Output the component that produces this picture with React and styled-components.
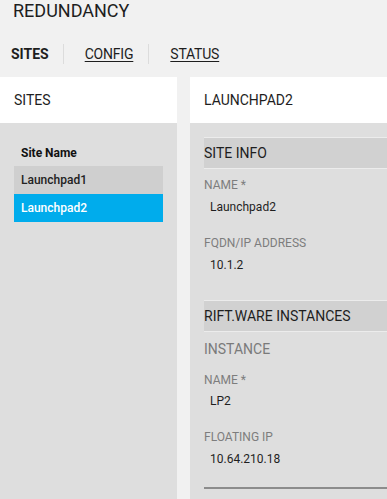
import React from "react";
import styled, { createGlobalStyle } from "styled-components";

const Global = createGlobalStyle`
  html, body { margin: 0; padding: 0; }
  body {
    background: #f1f1f1;
    font-family: Roboto, "Liberation Sans", Arial, sans-serif;
    color: #222;
    overflow: hidden;
  }
`;

const Page = styled.div`
  display: flex;
  flex-direction: column;
  height: 499px;
  overflow: hidden;
`;

const Title = styled.h1`
  margin: 0 0 0 13px;
  font-size: 18px;
  line-height: 22px;
  font-weight: 400;
  color: #1e1e1e;
`;

const Tabs = styled.nav`
  display: flex;
  align-items: center;
  margin: 22px 0 13px 11px;
  height: 20px;
`;

const Tab = styled.a`
  font-size: 14px;
  line-height: 20px;
  letter-spacing: ${(p) => (p.$active ? "0" : "-0.2px")};
  color: #1e1e1e;
  font-weight: ${(p) => (p.$active ? 700 : 400)};
  text-decoration: ${(p) => (p.$active ? "none" : "underline")};
  text-underline-offset: 2px;
  padding: ${(p) => (p.$first ? "0 14px 0 0" : "0 15px 0 21px")};
  border-left: ${(p) => (p.$first ? "none" : "1px solid #dcdcdc")};
  cursor: pointer;
`;

const Panels = styled.div`
  flex: 1;
  display: flex;
  gap: 13px;
  min-height: 0;
`;

const Panel = styled.section`
  display: flex;
  flex-direction: column;
  background: #dedede;
  ${(p) => (p.$width ? `width: ${p.$width}px; flex: none;` : "flex: 1;")}
`;

const PanelHeader = styled.header`
  height: 46px;
  background: #fff;
  display: flex;
  align-items: center;
  padding-left: 14px;
  font-size: 14px;
  color: #1e1e1e;
  flex: none;
`;

const PanelBody = styled.div`
  padding: ${(p) => p.$pad};
  flex: 1;
`;

const SiteTable = styled.div`
  width: 149px;
`;

const TableHead = styled.div`
  font-size: 12px;
  font-weight: 700;
  line-height: 16px;
  padding: 0 7px 5px;
  color: #111;
`;

const Row = styled.div`
  height: 28px;
  display: flex;
  align-items: center;
  padding: 0 7px;
  font-size: 12px;
  font-weight: 500;
  background: ${(p) => (p.$selected ? "#00acec" : "#cfcfcf")};
  color: ${(p) => (p.$selected ? "#fff" : "#222")};
`;

const SectionHeader = styled.div`
  height: 30px;
  display: flex;
  align-items: center;
  background: #d1d1d1;
  border-top: 1px solid #ececec;
  border-bottom: 1px solid #ececec;
  font-size: 14px;
  color: #1e1e1e;
  margin-top: ${(p) => p.$mt || 0}px;
`;

const SubTitle = styled.div`
  font-size: 14px;
  line-height: 20px;
  color: #7a7a7a;
  margin-top: 7px;
`;

const Field = styled.div`
  margin-top: ${(p) => p.$mt}px;
`;

const Label = styled.div`
  font-size: 12px;
  line-height: 16px;
  color: #7d7d7d;
`;

const Value = styled.div`
  font-size: 12px;
  line-height: 16px;
  color: #1e1e1e;
  padding-left: 6px;
  margin-top: ${(p) => p.$gap}px;
`;

const Rule = styled.hr`
  border: none;
  height: 2px;
  background: #8c8c8c;
  margin: 20px 0 0;
`;

export default function App() {
  return (
    <>
      <Global />
      <Page>
        <Title>REDUNDANCY</Title>
        <Tabs>
          <Tab $active $first>SITES</Tab>
          <Tab>CONFIG</Tab>
          <Tab>STATUS</Tab>
        </Tabs>
        <Panels>
          <Panel $width={177}>
            <PanelHeader>SITES</PanelHeader>
            <PanelBody $pad="22px 0 0 14px">
              <SiteTable>
                <TableHead>Site Name</TableHead>
                <Row>Launchpad1</Row>
                <Row $selected>Launchpad2</Row>
              </SiteTable>
            </PanelBody>
          </Panel>
          <Panel>
            <PanelHeader>LAUNCHPAD2</PanelHeader>
            <PanelBody $pad="14px 0 0 14px">
              <SectionHeader>SITE INFO</SectionHeader>
              <Field $mt={8}>
                <Label>NAME *</Label>
                <Value $gap={6}>Launchpad2</Value>
              </Field>
              <Field $mt={20}>
                <Label>FQDN/IP ADDRESS</Label>
                <Value $gap={6}>10.1.2</Value>
              </Field>
              <SectionHeader $mt={27}>RIFT.WARE INSTANCES</SectionHeader>
              <SubTitle>INSTANCE</SubTitle>
              <Field $mt={13}>
                <Label>NAME *</Label>
                <Value $gap={5}>LP2</Value>
              </Field>
              <Field $mt={20}>
                <Label>FLOATING IP</Label>
                <Value $gap={6}>10.64.210.18</Value>
              </Field>
              <Rule />
            </PanelBody>
          </Panel>
        </Panels>
      </Page>
    </>
  );
}
